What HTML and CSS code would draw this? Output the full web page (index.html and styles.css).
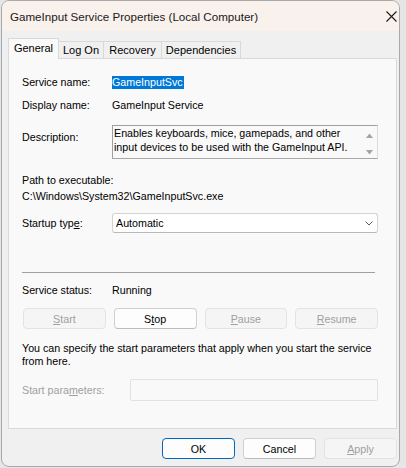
FILE: index.html
```html
<!DOCTYPE html>
<html>
<head>
<meta charset="utf-8">
<link rel="stylesheet" href="styles.css">
</head>
<body>
<div class="window">
  <div class="titlebar">
    <span class="title">GameInput Service Properties (Local Computer)</span>
    <svg class="close" width="11" height="11" viewBox="0 0 11 11"><path d="M0.5 0.5 L10.5 10.5 M10.5 0.5 L0.5 10.5" stroke="#1b1b1b" stroke-width="1.1" fill="none"/></svg>
  </div>
  <div class="client">
    <div class="tabs">
      <div class="tab active t-general">General</div>
      <div class="tab t-logon">Log On</div>
      <div class="tab t-recovery">Recovery</div>
      <div class="tab t-deps">Dependencies</div>
    </div>
    <div class="panel">
      <div class="row r-name"><span class="label">Service name:</span><span class="value"><span class="sel">GameInputSvc</span></span></div>
      <div class="row r-display"><span class="label">Display name:</span><span class="value">GameInput Service</span></div>
      <div class="row r-desc">
        <span class="label desc-label">Description:</span>
        <div class="descbox">
          <div class="desctext">Enables keyboards, mice, gamepads, and other input devices to be used with the GameInput API.</div>
          <div class="vscroll">
            <svg width="7" height="5" viewBox="0 0 7 5"><path d="M0 5 L3.5 0.5 L7 5 Z" fill="#a3a3a3"/></svg>
            <svg width="7" height="5" viewBox="0 0 7 5"><path d="M0 0 L3.5 4.5 L7 0 Z" fill="#a3a3a3"/></svg>
          </div>
        </div>
      </div>
      <div class="path">
        <div>Path to executable:</div>
        <div>C:\Windows\System32\GameInputSvc.exe</div>
      </div>
      <div class="row r-startup">
        <span class="label">Startup typ<u>e</u>:</span>
        <div class="combo"><span>Automatic</span><svg width="8" height="5" viewBox="0 0 8 5"><path d="M0.5 0.5 L4 4 L7.5 0.5" stroke="#5f5f5f" stroke-width="1" fill="none"/></svg></div>
      </div>
      <div class="sep"></div>
      <div class="row r-status"><span class="label">Service status:</span><span class="value">Running</span></div>
      <div class="svcbtns">
        <div class="btn disabled"><u>S</u>tart</div>
        <div class="btn">S<u>t</u>op</div>
        <div class="btn disabled"><u>P</u>ause</div>
        <div class="btn disabled"><u>R</u>esume</div>
      </div>
      <p class="hint">You can specify the start parameters that apply when you start the service from here.</p>
      <div class="row r-params"><span class="label muted">Start para<u>m</u>eters:</span><div class="input"></div></div>
    </div>
    <div class="footer">
      <div class="btn fbtn ok">OK</div>
      <div class="btn fbtn">Cancel</div>
      <div class="btn fbtn disabled"><u>A</u>pply</div>
    </div>
  </div>
</div>
</body>
</html>
```
FILE: styles.css
```css
body {
  margin: 0;
  background: #e6e6e6;
  font-family: "Liberation Sans", Arial, sans-serif;
  font-size: 10.7px;
  color: #000;
}
.window {
  box-sizing: border-box;
  width: 399px;
  height: 467px;
  margin-left: 1px;
  border: 1px solid #a9a9a9;
  border-radius: 8px;
  overflow: hidden;
  background: #f0f0f0;
  display: flex;
  flex-direction: column;
}
.titlebar {
  height: 30px;
  flex: none;
  background: #f8f1ec;
  display: flex;
  align-items: center;
  justify-content: space-between;
  padding: 0 2px 0 8px;
  font-size: 11.6px;
  color: #1a1a1a;
}
.close { margin-top: 1px; }
.client {
  padding: 7px 2px 0 6px;
}
.tabs {
  display: flex;
  align-items: flex-end;
  height: 21px;
}
.tab {
  box-sizing: border-box;
  height: 17px;
  margin-bottom: 1px;
  border: 1px solid #d9d9d9;
  border-bottom: none;
  border-left: none;
  background: #f0f0f0;
  text-align: center;
  line-height: 17px;
  font-size: 11px;
}
.tab.active {
  height: 21px;
  margin-bottom: 0;
  border-left: 1px solid #d9d9d9;
  background: #f9f9f9;
  position: relative;
  z-index: 1;
  line-height: 19px;
}
.t-general { width: 51px; }
.t-logon { width: 45px; }
.t-recovery { width: 58px; }
.t-deps { width: 79px; }
.panel {
  margin-top: -1px;
  border: 1px solid #d9d9d9;
  background: #f9f9f9;
  padding: 16px 18px 27px 13px;
}
.row {
  display: grid;
  grid-template-columns: 90px 1fr;
  align-items: center;
  line-height: 14px;
}
.r-display { margin-top: 9px; }
.sel {
  background: #0078d7;
  color: #fff;
  padding: 0 1px 0 0;
  display: inline-block;
  line-height: 13px;
}
.r-desc { margin-top: 13px; align-items: start; }
.desc-label { padding-top: 5px; }
.descbox {
  box-sizing: border-box;
  height: 34px;
  border-top: 1px solid #a0a0a0;
  border-left: 1px solid #a0a0a0;
  border-right: 1px solid #dcdcdc;
  border-bottom: 1px solid #a7a7a7;
  background: #f9f9f9;
  display: flex;
}
.desctext {
  flex: 1;
  padding-left: 1px;
  line-height: 14px;
}
.vscroll {
  width: 16px;
  display: flex;
  flex-direction: column;
  align-items: center;
  justify-content: space-between;
  padding: 7px 0 3px;
}
.path {
  margin-top: 13px;
  line-height: 16px;
}
.r-startup { margin-top: 9px; }
.combo {
  box-sizing: border-box;
  height: 20px;
  border: 1px solid #d3d3d3;
  border-bottom-color: #b9b9b9;
  border-radius: 3px;
  background: #fff;
  display: flex;
  align-items: center;
  justify-content: space-between;
  padding: 0 4px 0 3px;
}
.sep {
  margin-top: 39px;
  margin-right: 3px;
  height: 1px;
  background: #a0a0a0;
}
.r-status { margin-top: 10px; }
.svcbtns {
  margin-top: 11px;
  margin-left: 1px;
  display: grid;
  grid-template-columns: repeat(4, 1fr);
  gap: 8px;
}
.btn {
  box-sizing: border-box;
  height: 21px;
  border: 1px solid #d0d0d0;
  border-bottom-color: #bcbcbc;
  border-radius: 4px;
  background: #fdfdfd;
  display: flex;
  align-items: center;
  justify-content: center;
}
.btn.disabled {
  background: #f5f5f5;
  border-color: #e3e3e3;
  color: #a0a0a0;
}
.hint {
  margin: 13px 0 0;
  line-height: 13px;
}
.r-params {
  margin-top: 11px;
  grid-template-columns: 108px 1fr;
}
.muted { color: #a0a0a0; }
.input {
  box-sizing: border-box;
  height: 22px;
  border: 1px solid #e2e2e2;
  border-radius: 2px;
  background: #f9f9f9;
}
.footer {
  margin-top: 9px;
  display: flex;
  justify-content: flex-end;
  gap: 8px;
}
.fbtn { width: 73px; }
.fbtn.ok { border: 1px solid #0067c0; }
u { text-decoration-thickness: 1px; text-underline-offset: 1px; }
```
